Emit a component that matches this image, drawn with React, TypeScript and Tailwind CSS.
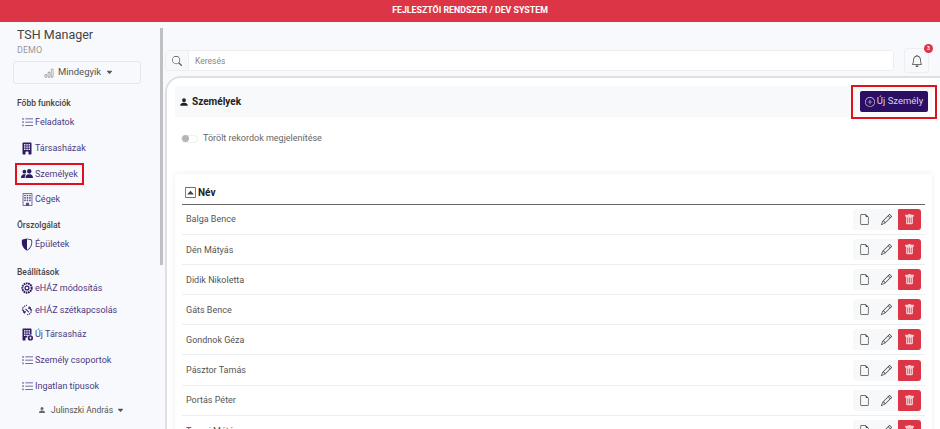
import type { ReactNode } from 'react';
import {
  BsBarChart,
  BsBell,
  BsBuildingFill,
  BsBuildingFillAdd,
  BsBuilding,
  BsCaretDownFill,
  BsCaretUpSquare,
  BsFileEarmark,
  BsListTask,
  BsPencil,
  BsPeopleFill,
  BsPersonFill,
  BsPlusCircle,
  BsSearch,
  BsShieldShaded,
  BsTrashFill,
} from 'react-icons/bs';

const people = [
  'Balga Bence',
  'Dén Mátyás',
  'Didik Nikoletta',
  'Gáts Bence',
  'Gondnok Géza',
  'Pásztor Tamás',
  'Portás Péter',
  'Tarnai Máté',
];

function GearIcon() {
  return (
    <svg width="12" height="12" viewBox="0 0 16 16" fill="none" stroke="currentColor">
      <circle cx="8" cy="8" r="6.2" strokeWidth="2.6" strokeDasharray="2.2 0.8" />
      <circle cx="8" cy="8" r="2.6" strokeWidth="1.6" />
    </svg>
  );
}

function UnlinkIcon() {
  return (
    <svg width="12" height="12" viewBox="0 0 16 16" fill="none" stroke="currentColor" strokeWidth="1.4">
      <path d="M2 9a6 6 0 0 1 6-7.2" strokeDasharray="2 1" />
      <path d="M14 7a6 6 0 0 1-6 7.2" strokeDasharray="2 1" />
      <path d="M6 6.5 10.5 11M10.5 3.5l2 2M3.5 10.5l2 2" />
      <path d="M9.5 5.5h3v3M3.5 7.5v3h3" />
    </svg>
  );
}

function NavItem({ icon, label, h, boxed }: { icon: ReactNode; label: string; h: string; boxed?: boolean }) {
  return (
    <div className={`flex items-center ${h}`}>
      <div className={`flex items-center gap-[2px] ${boxed ? 'ml-[15px] pl-[4px] pr-[4px] h-[22px] border-[2px] border-[#e0101c]' : 'ml-[21px]'}`}>
        <span className="w-[12px] flex justify-center text-[#2c1a63] text-[13px]">{icon}</span>
        <span className="pt-[2px] text-[9px] text-[#4b3a80]">{label}</span>
      </div>
    </div>
  );
}

function Section({ label, cls }: { label: string; cls: string }) {
  return <div className={`ml-[17px] text-[8.5px] h-[10px] leading-[10px] font-medium text-[#444] ${cls}`}>{label}</div>;
}

function Sidebar() {
  return (
    <aside className="w-[158px] shrink-0 flex flex-col">
      <div className="ml-[17px] mt-[5px] text-[12.5px] leading-[16px] text-[#444]">TSH Manager</div>
      <div className="ml-[17px] mt-[1px] text-[9px] leading-[12px] text-[#999]">DEMO</div>
      <div className="ml-[13px] mt-[5px] w-[128px] h-[23px] rounded-[3px] border border-[#e6e7ea] flex items-center justify-center gap-[3px] text-[9.5px] text-[#555] pl-[3px]">
        <BsBarChart className="text-[10px] text-[#888]" />
        <span className="ml-[1px]">Mindegyik</span>
        <BsCaretDownFill className="text-[7px] ml-[2px]" />
      </div>
      <Section label="Főbb funkciók" cls="mt-[14px]" />
      <NavItem h="h-[26px] mt-[1px]" icon={<span className="text-[#4b3a80]"><BsListTask /></span>} label="Feladatok" />
      <NavItem h="h-[26px]" icon={<BsBuildingFill />} label="Társasházak" />
      <NavItem h="h-[25px]" icon={<BsPeopleFill />} label="Személyek" boxed />
      <NavItem h="h-[26px]" icon={<span className="text-[#5b4b8a]"><BsBuilding /></span>} label="Cégek" />
      <Section label="Őrszolgálat" cls="mt-[8px]" />
      <NavItem h="h-[26px] mt-[1px]" icon={<BsShieldShaded />} label="Épületek" />
      <Section label="Beállítások" cls="mt-[10px]" />
      <NavItem h="h-[22px]" icon={<GearIcon />} label="eHÁZ módosítás" />
      <NavItem h="h-[22px]" icon={<UnlinkIcon />} label="eHÁZ szétkapcsolás" />
      <NavItem h="h-[26px]" icon={<BsBuildingFillAdd />} label="Új Társasház" />
      <NavItem h="h-[26px]" icon={<span className="text-[#4b3a80]"><BsListTask /></span>} label="Személy csoportok" />
      <NavItem h="h-[26px]" icon={<span className="text-[#4b3a80]"><BsListTask /></span>} label="Ingatlan típusok" />
      <div className="mt-[5px] ml-[38px] flex items-center text-[8.5px] text-[#555]">
        <BsPersonFill className="text-[8px] text-[#666] mr-[5px]" />
        Julinszki András
        <BsCaretDownFill className="text-[7px] ml-[4px]" />
      </div>
    </aside>
  );
}

function Row({ name }: { name: string }) {
  return (
    <div className="h-[30.2px] shrink-0 flex items-center justify-between border-b border-[#eceef0] pl-[4px] pr-[4px]">
      <span className="pt-[2px] text-[9px] text-[#555]">{name}</span>
      <div className="flex items-center">
        <div className="flex items-center h-[21px] w-[45px] bg-[#f7f8f9] rounded-l-[3px] text-[#444] text-[11px]">
          <span className="w-[22px] flex justify-center"><BsFileEarmark /></span>
          <span className="w-[23px] flex justify-center"><BsPencil /></span>
        </div>
        <div className="w-[23px] h-[21px] bg-[#dc3545] rounded-r-[3px] rounded-l-[1px] flex items-center justify-center text-[#f8c9ce] text-[11px]">
          <BsTrashFill />
        </div>
      </div>
    </div>
  );
}

export default function App() {
  return (
    <div className="h-[429px] w-[940px] overflow-hidden bg-[#f8f9fc] flex flex-col font-['Roboto','Open_Sans',sans-serif]">
      <header className="h-[22px] shrink-0 bg-[#dc3545] flex items-center justify-center text-white text-[8.8px] font-bold">
        FEJLESZTŐI RENDSZER / DEV SYSTEM
      </header>
      <div className="flex-1 flex min-h-0">
        <Sidebar />
        {/* scrollbar */}
        <div className="w-[7px] shrink-0 flex flex-col items-center pt-[6px]">
          <div className="w-[3px] h-[237px] bg-[#bfc0c2]" />
        </div>
        <main className="flex-1 min-w-0 flex flex-col pt-[26px]">
          <div className="flex items-center pr-[11px]">
            <div className="flex-1 h-[21px] flex border border-[#eceef0] rounded-[3px] bg-white">
              <div className="w-[23px] bg-[#f7f8f9] flex items-center justify-center border-r border-[#eceef0] text-[#555] text-[10px]">
                <BsSearch />
              </div>
              <div className="flex items-center pl-[6px] pt-[1px] text-[8.5px] text-[#888]">Keresés</div>
            </div>
            <div className="relative ml-[10px] w-[25px] h-[25px] border border-[#eceef0] rounded-[3px] flex items-center justify-center text-[#444] text-[12px]">
              <BsBell />
              <span className="absolute -top-[5px] -right-[5px] w-[9px] h-[9px] rounded-full bg-[#dc3545] text-white text-[5px] font-bold flex items-center justify-center">3</span>
            </div>
          </div>
          <div className="mt-[3px] flex-1 min-h-0 bg-white border-t-[2px] border-l-[2px] border-[#dfe0e2] rounded-tl-[16px] pl-[8px] pt-[8px] overflow-hidden">
            <div className="h-[31px] mr-[8px] bg-[#f8f9fa] flex items-center justify-between pl-[4px]">
              <div className="flex items-center gap-[3px] text-[#222]">
                <BsPersonFill className="text-[10px]" />
                <span className="text-[10px] font-bold">Személyek</span>
              </div>
              <div className="w-[86px] h-[34px] shrink-0 border-[2px] border-[#e0101c] flex items-center justify-center -mr-[5px]">
                <div className="w-[68px] h-[21px] rounded-[2px] bg-[#2c0f63] text-[#d9d3ea] flex items-center justify-center gap-[2px] text-[9.5px]">
                  <BsPlusCircle className="text-[10px]" />
                  Új Személy
                </div>
              </div>
            </div>
            <div className="mt-[15px] ml-[6px] flex items-center gap-[5px]">
              <div className="w-[17px] h-[8px] rounded-full border border-[#f0f0f0] bg-white flex items-center">
                <div className="w-[7px] h-[7px] rounded-full bg-[#b5b5b5]" />
              </div>
              <span className="text-[9px] text-[#666]">Törölt rekordok megjelenítése</span>
            </div>
            <div className="mt-[28px] mr-[8px] bg-white rounded-[3px] shadow-[0_0_6px_rgba(0,0,0,0.08)] px-[7px] pt-[7px] pb-[2px]">
              <div className="h-[24px] border-b-[1.5px] border-[#666] flex items-center gap-[2px] pl-[3px] text-[#222]">
                <BsCaretUpSquare className="text-[11px] text-[#444]" />
                <span className="text-[10px] font-bold">Név</span>
              </div>
              <div className="flex flex-col">
                {people.map(name => (
                  <Row key={name} name={name} />
                ))}
              </div>
            </div>
          </div>
        </main>
      </div>
    </div>
  );
}
